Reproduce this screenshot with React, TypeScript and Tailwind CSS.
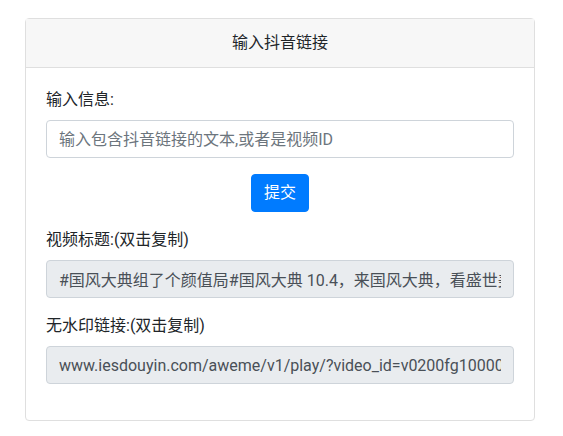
import React from "react";

const font = {
  fontFamily: 'Roboto, "Noto Sans CJK SC", sans-serif',
};

export default function App() {
  const title =
    "#国风大典组了个颜值局#国风大典 10.4，来国风大典，看盛世美颜，一起来打卡吧";
  const link =
    "www.iesdouyin.com/aweme/v1/play/?video_id=v0200fg10000c5kq3vbc77u1a2b3c4d0&ratio=720p&line=0";

  return (
    <div
      className="min-h-[436px] bg-white pl-[25px] pr-[28px] pt-[18px] text-[16px] leading-6 text-[#212529]"
      style={font}
    >
      <div className="flex flex-col rounded border border-[#dfdfdf] bg-white">
        <div className="border-b border-[#dfdfdf] bg-[#f7f7f7] px-5 py-3 text-center">
          输入抖音链接
        </div>
        <div className="p-5">
          <div className="mb-4">
            <label className="mb-2 block">输入信息:</label>
            <input
              type="text"
              placeholder="输入包含抖音链接的文本,或者是视频ID"
              className="block h-[38px] w-full rounded border border-[#ced4da] bg-white px-3 py-1.5 text-[#495057] outline-none placeholder:text-[#6c757d]"
            />
          </div>
          <div className="mb-4 flex justify-center">
            <button className="h-[38px] rounded border border-[#007bff] bg-[#007bff] px-3 text-white">
              提交
            </button>
          </div>
          <div className="mb-4">
            <label className="mb-2 block">视频标题:(双击复制)</label>
            <input
              type="text"
              readOnly
              value={title}
              className="block h-[38px] w-full rounded border border-[#ced4da] bg-[#e9ecef] px-3 py-1.5 text-[#495057] outline-none"
            />
          </div>
          <div className="mb-4">
            <label className="mb-2 block">无水印链接:(双击复制)</label>
            <input
              type="text"
              readOnly
              value={link}
              className="block h-[38px] w-full rounded border border-[#ced4da] bg-[#e9ecef] px-3 py-1.5 text-[#495057] outline-none"
            />
          </div>
        </div>
      </div>
    </div>
  );
}
